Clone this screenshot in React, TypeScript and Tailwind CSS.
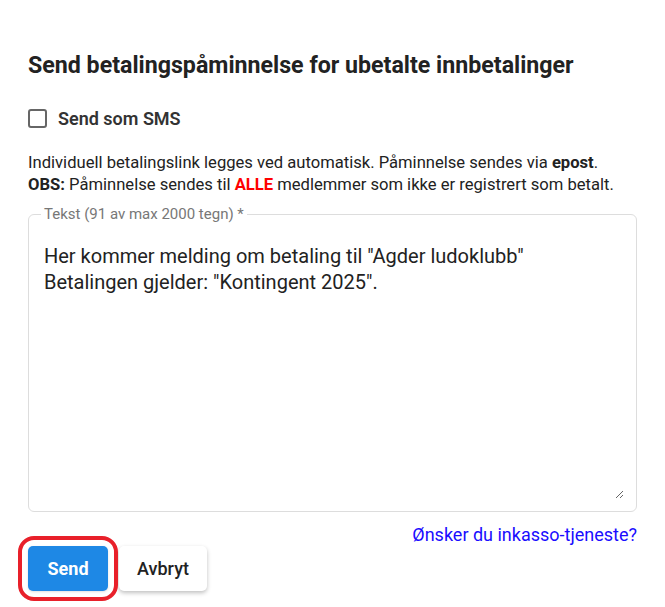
import { useState } from 'react';

export default function App() {
  const [sms, setSms] = useState(false);
  const [tekst, setTekst] = useState('Her kommer melding om betaling til "Agder ludoklubb"\nBetalingen gjelder: "Kontingent 2025".');

  return (
    <div className="min-h-screen bg-white px-[28px] pt-[50px] text-[#222]" style={{ fontFamily: 'Roboto, "Noto Sans", sans-serif' }}>
      <h2 className="text-[23.2px] font-bold leading-[30px] text-[#222]">Send betalingspåminnelse for ubetalte innbetalinger</h2>

      {/* SMS valg */}
      <label className="mt-[25px] flex items-center gap-[11px] cursor-pointer">
        <input
          type="checkbox" checked={sms} onChange={e => setSms(e.target.checked)}
          className="h-[19px] w-[19px] appearance-none rounded-[3px] border-2 border-[#666] bg-white"
        />
        <span className="text-[18px] font-semibold text-[#333]">Send som SMS</span>
      </label>

      <p className="mt-[20px] text-[16.6px] leading-[22px] text-[#222]">
        Individuell betalingslink legges ved automatisk. Påminnelse sendes via <b>{sms ? 'SMS' : 'epost'}</b>.<br />
        <b>OBS:</b> Påminnelse sendes til <b className="text-[#ff0000]">ALLE</b> medlemmer som ikke er registrert som betalt.
      </p>

      {/* Tekstfelt */}
      <fieldset className="mt-[10px] rounded-[6px] border border-[#ddd] px-[12px] pb-[12px]">
        <legend className="px-[3px] text-[15px] leading-[16px] text-[#777]">Tekst ({tekst.length} av max 2000 tegn) *</legend>
        <textarea
          value={tekst} onChange={e => setTekst(e.target.value)} maxLength={2000}
          className="mt-[21px] block h-[256px] w-full resize-y border-none px-[3px] text-[20px] leading-[26px] text-[#222] outline-none"
        />
      </fieldset>

      <div className="mt-[12px] text-right leading-[22px]">
        <a href="#" className="text-[18px] text-[#1a0dff]">Ønsker du inkasso-tjeneste?</a>
      </div>

      <div className="-mt-[1px] flex items-center gap-[11px]">
        <div className="relative">
          <button className="h-[45px] w-[80px] rounded-[5px] bg-[#1e88e5] text-[18px] font-bold text-white shadow-sm">Send</button>
          <div className="pointer-events-none absolute -inset-[10px] rounded-[16px] border-4 border-[#e8202a]" />
        </div>
        <button className="h-[45px] w-[88px] rounded-[5px] bg-white text-[18px] font-medium text-[#222] shadow-[0_2px_4px_rgba(0,0,0,0.25)]">Avbryt</button>
      </div>
    </div>
  );
}
